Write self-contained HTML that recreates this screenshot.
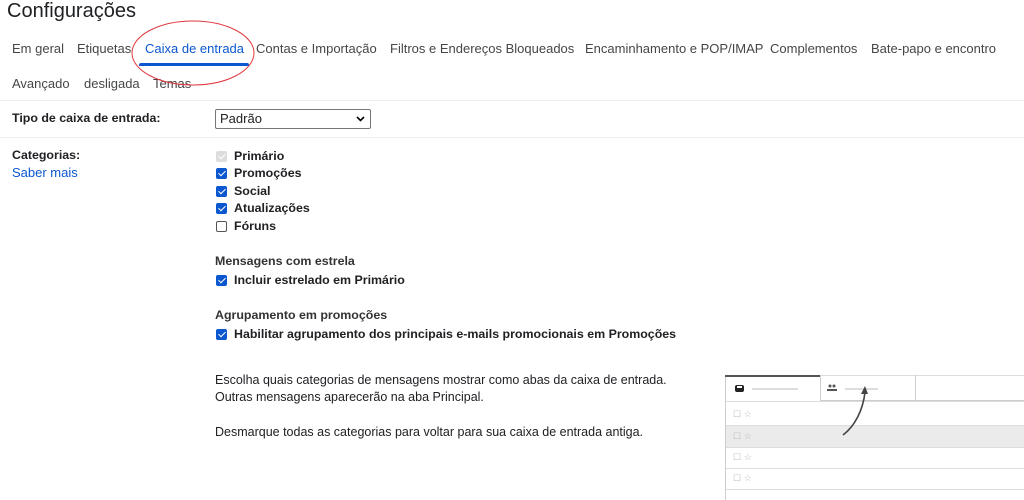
<!DOCTYPE html>
<html><head><meta charset="utf-8"><style>
body{margin:0;width:1024px;height:499px;overflow:hidden;background:#fff;font-family:"Liberation Sans",Arial,sans-serif;color:#202124;position:relative}
.a{position:absolute;white-space:nowrap}
.t{font-size:13px;color:#444746}
.b{font-size:12.4px;font-weight:bold;color:#202124}
.n{font-size:12.5px;color:#202124}
.cb{position:absolute;width:11px;height:11px;border-radius:2px;background:#0b57d0}
.cb::after{content:"";position:absolute;left:3.5px;top:1px;width:3px;height:6px;border:solid #fff;border-width:0 1.8px 1.8px 0;transform:rotate(45deg)}
.hr{position:absolute;left:0;width:1024px;height:1px;background:#eceff1}
</style></head><body>
<div class="a" style="left:7px;top:0;font-size:20px;color:#202124">Configurações</div>
<div class="a t" style="left:12px;top:41px">Em geral</div>
<div class="a t" style="left:77px;top:41px">Etiquetas</div>
<div class="a t" style="left:145px;top:41px;color:#0b57d0">Caixa de entrada</div>
<div class="a" style="left:139px;top:63px;width:110px;height:3px;background:#0b57d0;border-radius:2px 2px 0 0"></div>
<div class="a t" style="left:256px;top:41px">Contas e Importação</div>
<div class="a t" style="left:390px;top:41px">Filtros e Endereços Bloqueados</div>
<div class="a t" style="left:585px;top:41px">Encaminhamento e POP/IMAP</div>
<div class="a t" style="left:770px;top:41px">Complementos</div>
<div class="a t" style="left:871px;top:41px">Bate-papo e encontro</div>
<div class="a t" style="left:12px;top:76px">Avançado</div>
<div class="a t" style="left:84px;top:76px">desligada</div>
<div class="a t" style="left:153px;top:76px">Temas</div>
<svg class="a" style="left:130px;top:18px" width="130" height="72"><ellipse cx="63" cy="35" rx="61" ry="32" fill="none" stroke="#e0393e" stroke-width="1"/></svg>
<div class="hr" style="top:100px"></div>
<div class="a b" style="left:12px;top:111px">Tipo de caixa de entrada:</div>
<div class="a" style="left:215px;top:109px;width:154px;height:18px;border:1px solid #767676;border-radius:2px;font-size:13px;line-height:18px"><span style="margin-left:4px">Padrão</span><svg style="position:absolute;right:5px;top:6px" width="9" height="6"><path d="M1 1l3.5 3.5L8 1" fill="none" stroke="#000" stroke-width="1.6"/></svg></div>
<div class="hr" style="top:137px"></div>
<div class="a b" style="left:12px;top:148px">Categorias:</div>
<div class="a" style="left:12px;top:165px;font-size:13px;color:#0b57d0">Saber mais</div>
<div class="cb" style="left:216px;top:151px;background:#ddd"></div>
<div class="a b" style="left:234px;top:149px">Primário</div>
<div class="cb" style="left:216px;top:168px"></div>
<div class="a b" style="left:234px;top:166px">Promoções</div>
<div class="cb" style="left:216px;top:186px"></div>
<div class="a b" style="left:234px;top:184px">Social</div>
<div class="cb" style="left:216px;top:203px"></div>
<div class="a b" style="left:234px;top:201px">Atualizações</div>
<div class="a" style="left:216px;top:221px;width:9px;height:9px;border:1px solid #555;border-radius:2px"></div>
<div class="a b" style="left:234px;top:219px">Fóruns</div>
<div class="a" style="left:215px;top:254px;font-size:12.4px;font-weight:bold;color:#333">Mensagens com estrela</div>
<div class="cb" style="left:216px;top:275px"></div>
<div class="a b" style="left:234px;top:273px">Incluir estrelado em Primário</div>
<div class="a" style="left:215px;top:308px;font-size:12.4px;font-weight:bold;color:#333">Agrupamento em promoções</div>
<div class="cb" style="left:216px;top:329px"></div>
<div class="a b" style="left:234px;top:327px">Habilitar agrupamento dos principais e-mails promocionais em Promoções</div>
<div class="a n" style="left:215px;top:373px">Escolha quais categorias de mensagens mostrar como abas da caixa de entrada.</div>
<div class="a n" style="left:215px;top:390px">Outras mensagens aparecerão na aba Principal.</div>
<div class="a n" style="left:215px;top:425px">Desmarque todas as categorias para voltar para sua caixa de entrada antiga.</div>
<!-- illustration -->
<div class="a" style="left:725px;top:375px;width:299px;height:124px;border-left:1px solid #ccc;border-top:1px solid #ddd"></div>
<div class="a" style="left:725px;top:375px;width:95px;height:2px;background:#555"></div>
<div class="a" style="left:820px;top:375px;width:94px;height:25px;border-left:1px solid #ccc;border-right:1px solid #ccc"></div>
<div class="a" style="left:820px;top:400px;width:204px;height:1px;background:#ccc"></div>
<div class="a" style="left:726px;top:401px;width:298px;height:1px;background:#ddd"></div>
<div class="a" style="left:735px;top:385px;width:9px;height:7px;background:#222;border-radius:2px"></div>
<div class="a" style="left:737px;top:386px;width:5px;height:2px;background:#fff"></div>
<div class="a" style="left:752px;top:388px;width:46px;height:2px;background:#ddd"></div>
<svg class="a" style="left:827px;top:384px" width="12" height="8"><circle cx="3" cy="2" r="1.5" fill="#555"/><circle cx="7" cy="2" r="1.5" fill="#555"/><rect x="0" y="5" width="10" height="2" fill="#555"/></svg>
<div class="a" style="left:845px;top:388px;width:33px;height:2px;background:#ddd"></div>
<div class="a" style="left:726px;top:426px;width:298px;height:21px;background:#ebebeb"></div>
<div class="a" style="left:726px;top:425px;width:298px;height:1px;background:#ddd"></div>
<div class="a" style="left:726px;top:447px;width:298px;height:1px;background:#ddd"></div>
<div class="a" style="left:726px;top:468px;width:298px;height:1px;background:#ddd"></div>
<div class="a" style="left:726px;top:489px;width:298px;height:1px;background:#ddd"></div>
<div class="a" style="left:733px;top:409px;font-size:9px;color:#bbb">☐ ☆</div>
<div class="a" style="left:733px;top:431px;font-size:9px;color:#bbb">☐ ☆</div>
<div class="a" style="left:733px;top:452px;font-size:9px;color:#bbb">☐ ☆</div>
<div class="a" style="left:733px;top:473px;font-size:9px;color:#bbb">☐ ☆</div>
<svg class="a" style="left:835px;top:380px" width="40" height="60"><path d="M8 55C20 46 28 30 30 12" fill="none" stroke="#444" stroke-width="1.6"/><path d="M26 14l4-8 3 8z" fill="#444"/></svg>
</body></html>
